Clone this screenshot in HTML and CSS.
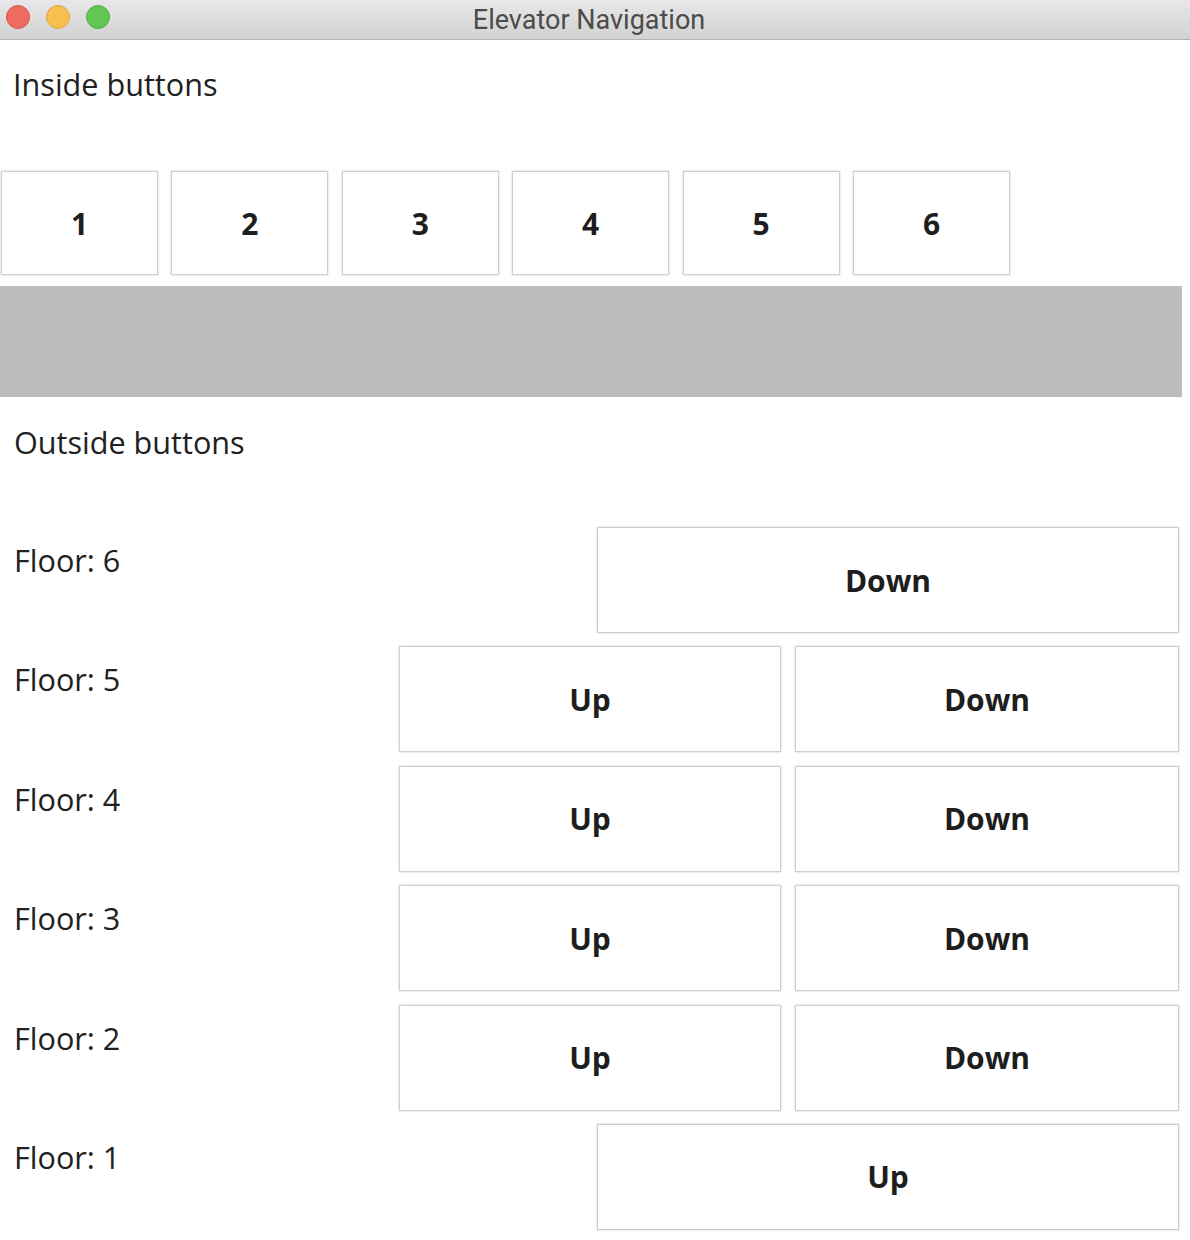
FILE: index.html
```html
<!DOCTYPE html>
<html lang="en">
<head>
<meta charset="utf-8">
<title>Elevator Navigation</title>
<link rel="stylesheet" href="styles.css">
</head>
<body>
<div class="window">
  <header class="titlebar">
    <div class="lights">
      <span class="light red"></span>
      <span class="light yellow"></span>
      <span class="light green"></span>
    </div>
    <div class="title">Elevator Navigation</div>
  </header>
  <main class="content">
    <h2 class="section-title inside-title">Inside buttons</h2>
    <div class="inside-row">
      <button class="btn num">1</button>
      <button class="btn num">2</button>
      <button class="btn num">3</button>
      <button class="btn num">4</button>
      <button class="btn num">5</button>
      <button class="btn num">6</button>
    </div>
    <div class="display"></div>
    <h2 class="section-title outside-title">Outside buttons</h2>
    <div class="floors">
      <div class="floor">
        <div class="floor-label">Floor: 6</div>
        <button class="btn wide">Down</button>
      </div>
      <div class="floor">
        <div class="floor-label">Floor: 5</div>
        <button class="btn up">Up</button>
        <button class="btn down">Down</button>
      </div>
      <div class="floor">
        <div class="floor-label">Floor: 4</div>
        <button class="btn up">Up</button>
        <button class="btn down">Down</button>
      </div>
      <div class="floor">
        <div class="floor-label">Floor: 3</div>
        <button class="btn up">Up</button>
        <button class="btn down">Down</button>
      </div>
      <div class="floor">
        <div class="floor-label">Floor: 2</div>
        <button class="btn up">Up</button>
        <button class="btn down">Down</button>
      </div>
      <div class="floor">
        <div class="floor-label">Floor: 1</div>
        <button class="btn wide">Up</button>
      </div>
    </div>
  </main>
</div>
</body>
</html>
```

FILE: styles.css
```css
* { box-sizing: border-box; }

html, body {
  margin: 0;
  padding: 0;
  background: #ffffff;
}

body {
  font-family: "Open Sans", "Noto Sans", sans-serif;
  color: #212121;
  width: 1190px;
  height: 1240px;
  overflow: hidden;
}

.window {
  width: 1190px;
  height: 1240px;
  background: #ffffff;
}

.titlebar {
  position: relative;
  height: 40px;
  background: linear-gradient(#e9e7e9, #d2d2d2);
  border-bottom: 1px solid #b3b3b3;
  display: flex;
  align-items: center;
  justify-content: center;
}

.lights {
  position: absolute;
  left: 6px;
  top: 5px;
  display: flex;
  gap: 16px;
}

.light {
  width: 24px;
  height: 24px;
  border-radius: 50%;
  display: block;
}

.red { background: #ee6b60; border: 1px solid #d8564c; }
.yellow { background: #f6bf50; border: 1px solid #dca53c; }
.green { background: #62c655; border: 1px solid #4fae42; }

.title {
  font-family: "Roboto", "Liberation Sans", sans-serif;
  font-size: 27px;
  color: #4b4b4b;
  line-height: 38px;
  margin-left: -12px;
}

.content {
  width: 1182px;
}

.section-title {
  margin: 0;
  font-weight: 400;
  font-size: 30.6px;
  line-height: 41px;
  color: #212121;
}

.inside-title {
  padding-left: 13px;
  margin-top: 24px;
}

.inside-row {
  display: flex;
  gap: 13.4px;
  margin-top: 66px;
  padding-left: 1px;
}

.btn {
  background: #ffffff;
  border: 1px solid #cfcfcf;
  box-shadow: 0 0 2px rgba(0, 0, 0, 0.2);
  font-family: "Open Sans", "Noto Sans", sans-serif;
  font-weight: 700;
  font-size: 30px;
  color: #1e1e1e;
  padding: 0;
  margin: 0;
  border-radius: 0;
  display: flex;
  align-items: center;
  justify-content: center;
}

.num {
  width: 157px;
  height: 104px;
}

.display {
  margin-top: 11px;
  height: 111px;
  background: #bdbdbd;
}

.outside-title {
  padding-left: 14px;
  margin-top: 25px;
}

.floors {
  margin-top: 64px;
  display: flex;
  flex-direction: column;
  gap: 13.4px;
  padding-right: 3px;
}

.floor {
  display: flex;
  height: 106px;
}

.floor-label {
  flex: 1;
  padding-left: 14px;
  padding-top: 13px;
  font-size: 30.6px;
  line-height: 41px;
  color: #212121;
}

.wide {
  width: 582px;
  height: 106px;
}

.up {
  width: 382px;
  height: 106px;
  margin-right: 14px;
}

.down {
  width: 384px;
  height: 106px;
}
```
